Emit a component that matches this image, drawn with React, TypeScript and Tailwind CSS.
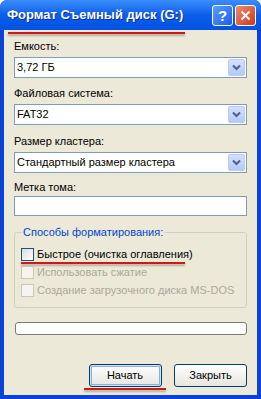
import React from 'react';

// Underline marks drawn on top of the original screenshot
const RedMark: React.FC<{ className?: string }> = ({ className = '' }) => (
    <div className={`h-[2px] bg-[#D01818] shadow-[0_2px_2px_rgba(80,60,40,0.35)] ${className}`} />
);

const ComboBox: React.FC<{ value: string }> = ({ value }) => (
    <div className="mt-[4px] flex h-[21px] items-center border border-[#7F9DB9] bg-white pl-[2px] pr-[1px]">
        <span className="flex-1 truncate leading-[13px]">{value}</span>
        <div className="flex h-[17px] w-[17px] items-center justify-center rounded-[2px] border border-[#BCCDF5] bg-gradient-to-b from-[#D3E0FD] to-[#B3C9F8]">
            <svg width="9" height="7" viewBox="0 0 9 7">
                <path d="M1 1.5 L4.5 5 L8 1.5" fill="none" stroke="#4D6185" strokeWidth="2" />
            </svg>
        </div>
    </div>
);

const CheckBox: React.FC<{ label: string; disabled?: boolean }> = ({ label, disabled }) => (
    <div className="flex h-[13px] items-center gap-[3px]">
        <div
            className={
                disabled
                    ? 'h-[13px] w-[13px] border border-[#C9C7BA] bg-[#F5F4EE]'
                    : 'h-[13px] w-[13px] border border-[#1C5180] bg-gradient-to-br from-[#DCDCD7] to-white'
            }
        />
        <span className={disabled ? 'leading-[13px] text-[#ACA899]' : 'leading-[13px] text-black'}>{label}</span>
    </div>
);

export default function App() {
    return (
        <div className="flex h-[399px] w-[261px] flex-col overflow-hidden rounded-t-[7px] bg-[#0843D6] font-['Liberation_Sans',Arial,sans-serif] text-[11px] text-black">
            {/* Title bar */}
            <div className="flex h-[30px] shrink-0 items-center bg-gradient-to-b from-[#3B8DFB] via-[#0A5DE9] to-[#0452E4] pl-[7px] pr-[5px]">
                <span className="flex-1 text-[13px] font-bold text-white [text-shadow:1px_1px_0_#0A2FA0]">
                    Формат Съемный диск (G:)
                </span>
                <div className="flex gap-[2px]">
                    <div className="flex h-[21px] w-[21px] items-center justify-center rounded-[3px] border border-white bg-gradient-to-br from-[#5C9CFF] to-[#1A5EE6] text-[15px] font-bold leading-none text-white">
                        ?
                    </div>
                    <div className="flex h-[21px] w-[21px] items-center justify-center rounded-[3px] border border-white bg-gradient-to-br from-[#EE8A6A] to-[#C8381A]">
                        <svg width="11" height="11" viewBox="0 0 11 11">
                            <path d="M1.5 1.5 L9.5 9.5 M9.5 1.5 L1.5 9.5" stroke="white" strokeWidth="2" />
                        </svg>
                    </div>
                </div>
            </div>

            {/* Client area */}
            <div className="mx-[4px] mb-[4px] flex flex-1 flex-col bg-[#ECE9D8] px-[10px]">
                <RedMark className="-ml-[6px] mt-[2px] w-[177px]" />

                <div className="mt-[6px] leading-[13px]">Емкость:</div>
                <ComboBox value="3,72 ГБ" />

                <div className="mt-[9px] leading-[13px]">Файловая система:</div>
                <ComboBox value="FAT32" />

                <div className="mt-[10px] leading-[13px]">Размер кластера:</div>
                <ComboBox value="Стандартный размер кластера" />

                <div className="mt-[8px] leading-[13px]">Метка тома:</div>
                <div className="mt-[2px] h-[20px] border border-[#7F9DB9] bg-white" />

                <fieldset className="mt-[10px] rounded-[3px] border border-[#D0D0BF] px-[6px] pb-[10px]">
                    <legend className="ml-[1px] px-[1px] leading-[13px] text-[#0046D5]">Способы форматирования:</legend>
                    <div className="mt-[9px] flex flex-col">
                        <CheckBox label="Быстрое (очистка оглавления)" />
                        <RedMark className="mt-[1px] w-[164px]" />
                        <div className="mt-[2px] flex flex-col gap-[5px]">
                            <CheckBox label="Использовать сжатие" disabled />
                            <CheckBox label="Создание загрузочного диска MS-DOS" disabled />
                        </div>
                    </div>
                </fieldset>

                <div className="ml-[1px] mt-[14px] h-[13px] rounded-[3px] border border-[#7A7A7A] bg-white" />

                <div className="mt-[29px] flex items-start justify-end gap-[8px]">
                    <div className="flex flex-col items-center">
                        <button className="h-[23px] w-[73px] rounded-[3px] border border-[#003C74] bg-gradient-to-b from-white to-[#E6E5DE] shadow-[inset_0_0_0_1px_#CEE2FC,inset_0_0_0_2px_#89ADE4] leading-[13px]">
                            Начать
                        </button>
                        <RedMark className="mt-[1px] w-[82px]" />
                    </div>
                    <button className="h-[23px] w-[73px] rounded-[3px] border border-[#003C74] bg-gradient-to-b from-white to-[#E6E5DE] leading-[13px]">
                        Закрыть
                    </button>
                </div>
            </div>
        </div>
    );
}
